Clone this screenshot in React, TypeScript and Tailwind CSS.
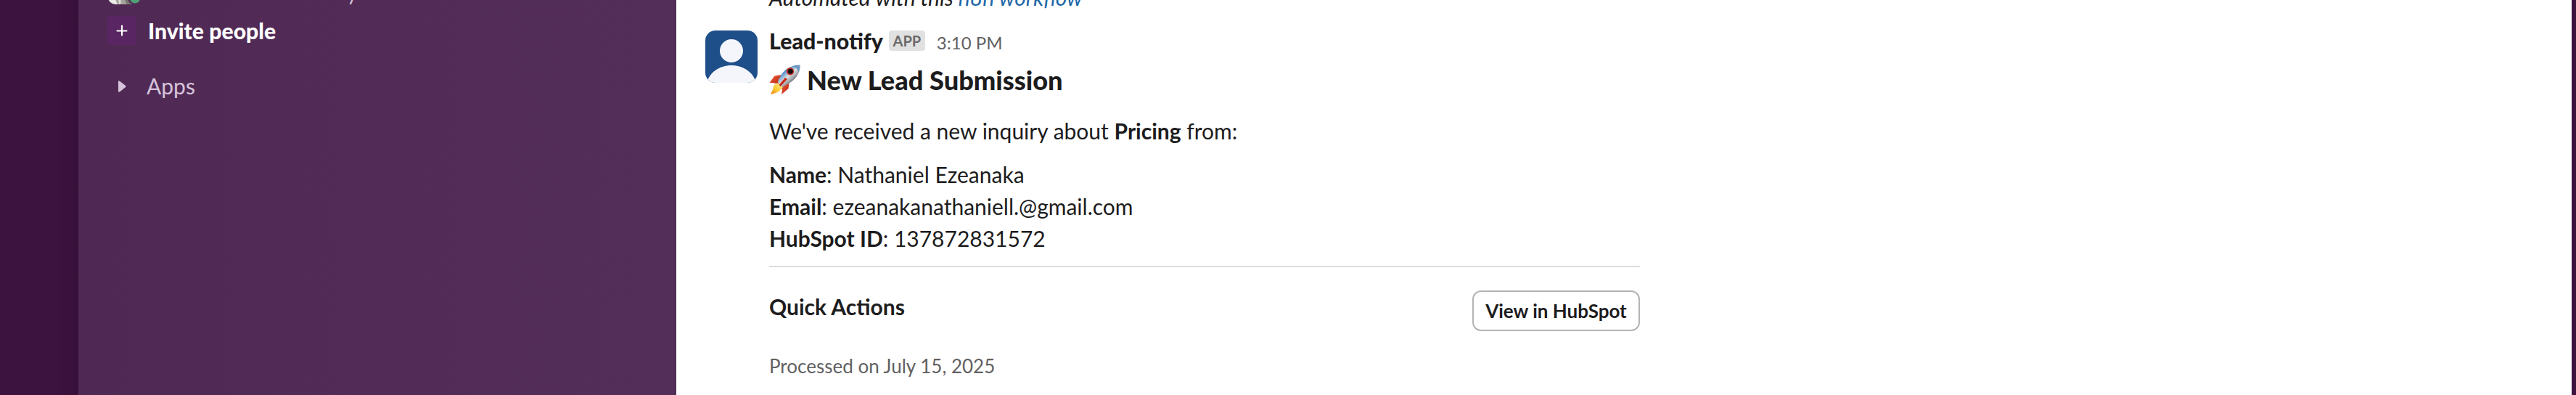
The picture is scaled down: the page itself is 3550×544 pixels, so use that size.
import React from "react";

function Rocket() {
  return (
    <svg className="h-[44px] w-[44px] shrink-0" viewBox="0 0 44 44">
      <defs>
        <linearGradient id="body" gradientUnits="userSpaceOnUse" x1="20" y1="8" x2="34" y2="24">
          <stop offset="0" stopColor="#2f6fb3" />
          <stop offset="0.3" stopColor="#8db4d8" />
          <stop offset="0.5" stopColor="#dcdfe1" />
          <stop offset="0.75" stopColor="#a9adb1" />
          <stop offset="1" stopColor="#5b6672" />
        </linearGradient>
        <linearGradient id="flame" x1="1" y1="0" x2="0" y2="1">
          <stop offset="0" stopColor="#fff6a0" />
          <stop offset="0.6" stopColor="#fdc62d" />
          <stop offset="1" stopColor="#ee7a1a" />
        </linearGradient>
        <linearGradient id="fin" x1="0" y1="0" x2="1" y2="1">
          <stop offset="0" stopColor="#f0603a" />
          <stop offset="1" stopColor="#b9200f" />
        </linearGradient>
      </defs>
      <path d="M17 15 L8 16.500 Q6.500 17 6 18.500 L0.500 26 L5 26 L13 28 Z" fill="url(#fin)" />
      <path d="M27.500 26 L26.500 34 L17 42 L18 36 L16 31 Z" fill="url(#fin)" />
      <path d="M11 26 L6 30 L5.500 34 L2 42 L9 40 L14 37.500 L19 32 Z" fill="url(#flame)" />
      <path d="M42.500 1.500 C34 1 24 5 18 13 L12.500 22 Q11.500 25 13 27 L16.500 31 Q18 32 20 31 L30 25 C38 19.500 43.500 10 42.500 1.500 Z" fill="url(#body)" />
      <path d="M42.500 1.500 C38.500 1.300 35 2.200 32 3.500 C36 4 40 7.500 40.500 11.500 C42 8 42.700 4.800 42.500 1.500 Z" fill="#4f86bd" opacity="0.75" />
      <path d="M22 19 L25 21 L15.500 31 L13.500 29 Z" fill="#c62a17" />
      <circle cx="29" cy="10.300" r="5.200" fill="#c93327" />
      <circle cx="29.300" cy="10.300" r="3.500" fill="#15100f" />
    </svg>
  );
}

function Avatar() {
  return (
    <svg className="h-[72px] w-[72px] shrink-0 rounded-[14px]" viewBox="0 0 72 72">
      <rect width="72" height="72" fill="#1f4f89" />
      <circle cx="36" cy="28" r="16" fill="#f4f6fb" />
      <path d="M2 72 C6 57 20 48 36 48 C52 48 66 57 70 72 Z" fill="#f4f6fb" />
    </svg>
  );
}

function Field({ label, value }: { label: string; value: string }) {
  return (
    <p>
      <b className="font-bold">{label}</b>: {value}
    </p>
  );
}

function Sidebar() {
  return (
    <aside className="flex w-[824px] shrink-0 flex-col bg-gradient-to-r from-[#4f2953] via-[#522c57] to-[#532e59]">
      <div className="flex h-[10px] items-end overflow-hidden pl-[40px]">
        <svg className="h-[10px] w-[50px] shrink-0" viewBox="0 0 50 10">
          <defs>
            <clipPath id="portrait">
              <rect x="1" y="-34" width="40" height="40" rx="10" />
            </clipPath>
          </defs>
          <g clipPath="url(#portrait)">
            <rect x="0" y="-34" width="40" height="40" fill="#ececea" />
            <path d="M11 -1 L14 7 L30 7 L26 -1 Z" fill="#a5a5a0" />
            <path d="M15 -1 L16 7 L19 4 L18 -1 Z" fill="#d9d9d5" />
            <path d="M24 0 L27 7 L34 7 L28 -1 Z" fill="#77776f" />
          </g>
          <circle cx="38" cy="-3" r="10" fill="#522c57" />
          <circle cx="38" cy="-2.500" r="7" fill="#4f9f77" />
        </svg>
        <span className="mb-[8px] ml-[280px] text-[28px] leading-[24px] text-[#d3c0d8]">y</span>
      </div>
      <div className="mt-[12px] flex h-[40px] items-center pl-[40px]">
        <div className="flex h-[40px] w-[40px] items-center justify-center bg-[#592663]">
          <svg className="h-[16px] w-[16px]" viewBox="0 0 16 16">
            <path d="M8 1.500V14.500M1.500 8.500H14.500" stroke="#fff" strokeWidth="2.200" strokeLinecap="round" />
          </svg>
        </div>
        <span className="ml-[16px] text-[30.2px] leading-[40px] font-black text-white">Invite people</span>
      </div>
      <div className="mt-[36px] flex h-[40px] items-center pl-[55px]">
        <svg className="mt-[2px] h-[16px] w-[12px]" viewBox="0 0 12 16">
          <path d="M0 1.500Q0 -.5 2 .8L10 7Q11 8 10 9L2 15.500Q0 16.500 0 14.500Z" fill="#d6c3db" />
        </svg>
        <span className="ml-[27px] text-[30px] leading-[40px] text-[#d6c3db]">Apps</span>
      </div>
    </aside>
  );
}

export default function App() {
  return (
    <div className="flex h-[544px] w-[3550px] overflow-hidden bg-[#3c123f] font-[Lato,sans-serif]">
      <div className="w-[108px] shrink-0 bg-gradient-to-r from-[#3c123f] from-70% to-[#37103a]" />
      <Sidebar />
      <main className="flex w-[2612px] shrink-0 flex-col bg-white text-[30px] leading-[44px] text-[#1d1c1d]">
        <div className="flex h-[42px] items-start overflow-hidden pl-[128px]">
          <p className="mt-[-26px] italic">
            Automated with this <a className="text-[#1f68a8]">n8n workflow</a>
          </p>
        </div>
        <div className="flex gap-[16px] pl-[40px]">
          <Avatar />
          <div className="flex w-[1200px] flex-col">
            <div className="mt-[-8px] flex h-[44px] items-center">
              <span className="text-[30.3px] font-black">Lead-notify</span>
              <span className="ml-[8px] flex h-[28px] w-[50px] items-center justify-center rounded-[4px] bg-[#e1e1e1] text-[20px] font-bold text-[#6a696a]">
                APP
              </span>
              <span className="mt-[5px] ml-[16px] text-[24px] text-[#616061]">3:10 PM</span>
            </div>
            <h2 className="mt-[8px] flex h-[48px] items-center gap-[8px] text-[36.2px] leading-[48px] font-black">
              <Rocket />
              <span>New Lead Submission</span>
            </h2>
            <p className="mt-[24px]">
              We've received a new inquiry about <b className="font-bold">Pricing</b> from:
            </p>
            <div className="mt-[16px]">
              <Field label="Name" value="Nathaniel Ezeanaka" />
              <Field label="Email" value="ezeanakanathaniell.@gmail.com" />
              <Field label="HubSpot ID" value="137872831572" />
            </div>
            <div className="mt-[16px] h-[2px] bg-[#dddddd]" />
            <div className="mt-[32px] flex items-start justify-between">
              <b className="font-bold">Quick Actions</b>
              <button className="h-[56px] w-[231px] rounded-[12px] border-2 border-[#b4b4b4] text-center text-[26px] leading-[50px] font-bold">
                View in HubSpot
              </button>
            </div>
            <p className="mt-[28px] text-[26px] leading-[40px] text-[#616061]">Processed on July 15, 2025</p>
          </div>
        </div>
      </main>
    </div>
  );
}
